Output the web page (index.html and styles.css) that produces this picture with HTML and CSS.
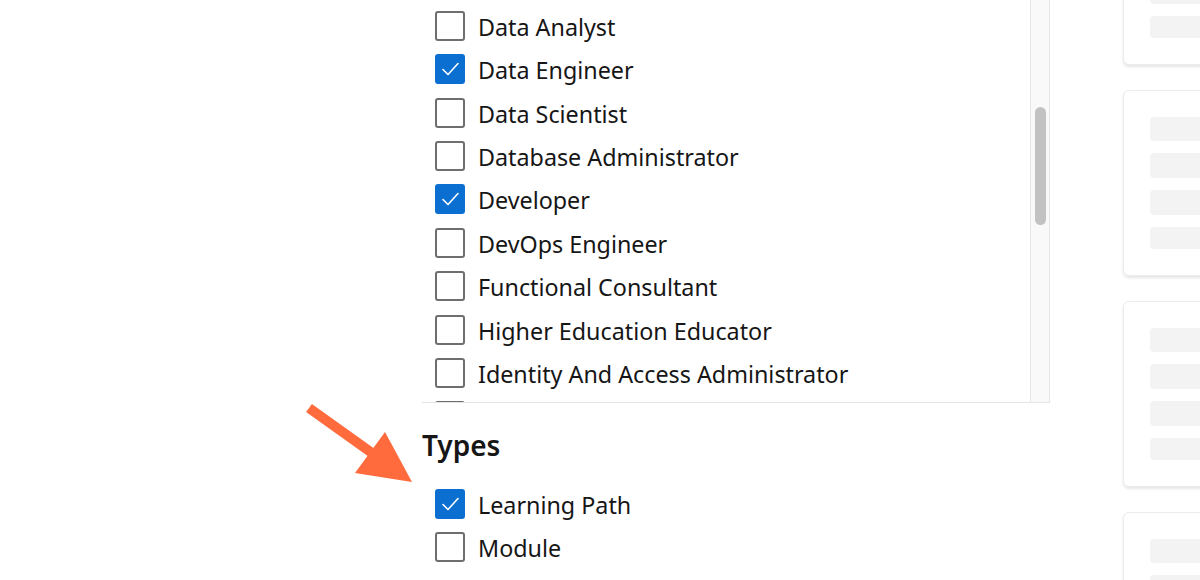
FILE: index.html
```html
<!DOCTYPE html>
<html lang="en">
<head>
<meta charset="utf-8">
<title>Filters</title>
<link rel="stylesheet" href="styles.css">
</head>
<body>
<div class="page">
  <div class="filters">
    <div class="scroll">
      <ul class="list">
        <li class="row"><span class="box"></span><span class="label">Data Analyst</span></li>
        <li class="row"><span class="box checked"><svg viewBox="0 0 30 30"><path d="M8 15.5 L13 20.5 L23 9.5"/></svg></span><span class="label">Data Engineer</span></li>
        <li class="row"><span class="box"></span><span class="label">Data Scientist</span></li>
        <li class="row"><span class="box"></span><span class="label">Database Administrator</span></li>
        <li class="row"><span class="box checked"><svg viewBox="0 0 30 30"><path d="M8 15.5 L13 20.5 L23 9.5"/></svg></span><span class="label">Developer</span></li>
        <li class="row"><span class="box"></span><span class="label">DevOps Engineer</span></li>
        <li class="row"><span class="box"></span><span class="label">Functional Consultant</span></li>
        <li class="row"><span class="box"></span><span class="label">Higher Education Educator</span></li>
        <li class="row"><span class="box"></span><span class="label">Identity And Access Administrator</span></li>
        <li class="row"><span class="box"></span></li>
      </ul>
      <div class="scrollbar"><div class="thumb"></div></div>
    </div>
    <h2 class="heading">Types</h2>
    <ul class="types">
      <li class="row"><span class="box checked"><svg viewBox="0 0 30 30"><path d="M8 15.5 L13 20.5 L23 9.5"/></svg></span><span class="label">Learning Path</span></li>
      <li class="row"><span class="box"></span><span class="label">Module</span></li>
    </ul>
  </div>
  <div class="cards">
    <div class="card"><div class="bar b1"></div><div class="bar b2"></div><div class="bar b3"></div><div class="bar b4"></div></div>
    <div class="card"><div class="bar b1"></div><div class="bar b2"></div><div class="bar b3"></div><div class="bar b4"></div></div>
    <div class="card"><div class="bar b1"></div><div class="bar b2"></div><div class="bar b3"></div><div class="bar b4"></div></div>
    <div class="card"><div class="bar b1"></div><div class="bar b2"></div><div class="bar b3"></div><div class="bar b4"></div></div>
  </div>
  <svg class="arrow" viewBox="0 0 120 90" width="120" height="90">
    <line x1="9" y1="8" x2="72" y2="53" class="shaft"/>
    <polygon points="85,32 55,73 112,82" class="head"/>
  </svg>
</div>
</body>
</html>
```

FILE: styles.css
```css
* { box-sizing: border-box; }
html, body { margin: 0; padding: 0; background: #ffffff; }
body {
  font-family: "Noto Sans", "Open Sans", "DejaVu Sans", sans-serif;
  color: #161616;
}
.page {
  position: relative;
  width: 1200px;
  height: 580px;
  overflow: hidden;
  display: flex;
  align-items: flex-start;
  padding-left: 422px;
}
.filters {
  flex: none;
  width: 628px;
}
.scroll {
  display: flex;
  height: 403px;
  border-bottom: 1px solid #e4e4e4;
  overflow: hidden;
}
.list, .types {
  list-style: none;
  margin: 0;
  padding: 0;
}
.list {
  flex: 1;
  padding-top: 4.3px;
  overflow: hidden;
}
.row {
  display: flex;
  align-items: center;
  height: 43.375px;
  padding-left: 13px;
  gap: 13px;
}
.box {
  flex: none;
  width: 30px;
  height: 30px;
  border: 2px solid #6e6e6e;
  border-radius: 3px;
  background: #fff;
  display: flex;
  align-items: center;
  justify-content: center;
}
.box.checked {
  background: #0b6fd1;
  border-color: #0b6fd1;
}
.box svg {
  width: 30px;
  height: 30px;
  flex: none;
}
.box svg path {
  fill: none;
  stroke: #ffffff;
  stroke-width: 1.6;
  stroke-linecap: round;
  stroke-linejoin: round;
}
.label {
  font-size: 23.3px;
  line-height: 30px;
  padding-top: 2px;
  white-space: nowrap;
}
.scrollbar {
  flex: none;
  width: 20px;
  height: 403px;
  background: #f9f9f9;
  border-left: 1px solid #e6e6e6;
  border-right: 1px solid #e6e6e6;
  padding-top: 107px;
  padding-left: 4px;
}
.thumb {
  width: 11px;
  height: 118px;
  border-radius: 6px;
  background: #c2c2c2;
}
.heading {
  margin: 24px 0 0 0;
  font-size: 28px;
  line-height: 36px;
  font-weight: 600;
  color: #161616;
}
.types {
  margin-top: 19px;
}
.cards {
  flex: none;
  width: 320px;
  margin-left: 73px;
  margin-top: -121px;
  display: flex;
  flex-direction: column;
  gap: 25px;
}
.card {
  height: 186px;
  border: 1px solid #ececec;
  border-radius: 6px;
  box-shadow: 0 2px 3px rgba(0, 0, 0, 0.10);
  padding: 26px 0 26px 26px;
  display: flex;
  flex-direction: column;
  gap: 12px;
  background: #fff;
}
.bar {
  background: #f3f3f3;
  border-radius: 4px;
}
.b1 { height: 24px; }
.b2 { height: 25px; }
.b3 { height: 25px; }
.b4 { height: 22px; }
.arrow {
  position: absolute;
  left: 300px;
  top: 400px;
}
.arrow .shaft {
  stroke: #ff6b3d;
  stroke-width: 10;
}
.arrow .head {
  fill: #ff6b3d;
}
```
